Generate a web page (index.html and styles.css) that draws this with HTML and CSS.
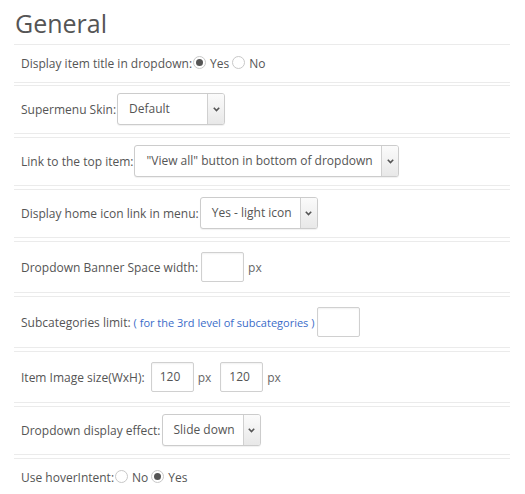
FILE: index.html
```html
<!DOCTYPE html>
<html>
<head>
<meta charset="utf-8">
<link rel="stylesheet" href="styles.css">
</head>
<body>
<div class="panel">
  <h2 class="title">General</h2>

  <div class="row row-text">
    <span class="label">Display item title in dropdown:</span>
    <span class="radio checked"></span><span class="opt">Yes</span>
    <span class="radio"></span><span class="opt">No</span>
  </div>

  <div class="row row-select">
    <span class="label">Supermenu Skin:</span>
    <div class="select w-skin"><span class="value">Default</span><span class="arrow"><svg width="7" height="5" viewBox="0 0 7 5"><path d="M0.8 0.8 L3.5 3.6 L6.2 0.8" fill="none" stroke="#555" stroke-width="1.6"/></svg></span></div>
  </div>

  <div class="row row-select">
    <span class="label">Link to the top item:</span>
    <div class="select w-link"><span class="value">"View all" button in bottom of dropdown</span><span class="arrow"><svg width="7" height="5" viewBox="0 0 7 5"><path d="M0.8 0.8 L3.5 3.6 L6.2 0.8" fill="none" stroke="#555" stroke-width="1.6"/></svg></span></div>
  </div>

  <div class="row row-select">
    <span class="label">Display home icon link in menu:</span>
    <div class="select w-home"><span class="value">Yes - light icon</span><span class="arrow"><svg width="7" height="5" viewBox="0 0 7 5"><path d="M0.8 0.8 L3.5 3.6 L6.2 0.8" fill="none" stroke="#555" stroke-width="1.6"/></svg></span></div>
  </div>

  <div class="row row-input">
    <span class="label">Dropdown Banner Space width:</span>
    <span class="input"></span>
    <span class="unit">px</span>
  </div>

  <div class="row row-input">
    <span class="label">Subcategories limit:</span>
    <span class="hint">( for the 3rd level of subcategories )</span>
    <span class="input"></span>
  </div>

  <div class="row row-input">
    <span class="label">Item Image size(WxH):</span>
    <span class="input wide-gap">120</span>
    <span class="unit">px</span>
    <span class="input wider-gap">120</span>
    <span class="unit">px</span>
  </div>

  <div class="row row-select">
    <span class="label">Dropdown display effect:</span>
    <div class="select w-effect"><span class="value">Slide down</span><span class="arrow"><svg width="7" height="5" viewBox="0 0 7 5"><path d="M0.8 0.8 L3.5 3.6 L6.2 0.8" fill="none" stroke="#555" stroke-width="1.6"/></svg></span></div>
  </div>

  <div class="row row-text">
    <span class="label">Use hoverIntent:</span>
    <span class="radio"></span><span class="opt">No</span>
    <span class="radio checked"></span><span class="opt">Yes</span>
  </div>
</div>
</body>
</html>
```

FILE: styles.css
```css
html, body {
  margin: 0;
  padding: 0;
  background: #fff;
}
body {
  font-family: "Open Sans", "Liberation Sans", sans-serif;
  font-size: 12px;
  color: #555;
}
.panel {
  width: 496px;
  margin-left: 14px;
}
.title {
  margin: 0;
  padding: 6px 0 0 1px;
  height: 44px;
  box-sizing: border-box;
  font-size: 25px;
  font-weight: 400;
  line-height: 34px;
  color: #555;
}
.row {
  display: flex;
  align-items: center;
  border-top: 1px solid #ebebeb;
  border-bottom: 1px solid #ebebeb;
  padding-left: 7px;
  margin-bottom: 3px;
}
.title + .row {
  margin-bottom: 2px;
}
.row-text {
  padding-top: 8px;
  padding-bottom: 7px;
  line-height: 22px;
}
.row-select {
  padding-top: 7px;
  padding-bottom: 8px;
}
.row-input {
  padding-top: 10px;
  padding-bottom: 10px;
}
.label {
  white-space: nowrap;
}
.radio {
  width: 11px;
  height: 11px;
  border: 1px solid #c8c8c8;
  border-radius: 50%;
  margin: 0 4px 0 1px;
  position: relative;
  top: -2px;
  background: #fff;
  box-sizing: content-box;
  display: inline-flex;
  align-items: center;
  justify-content: center;
}
.radio.checked::after {
  content: "";
  width: 7px;
  height: 7px;
  border-radius: 50%;
  background: #555;
}
.opt {
  margin-right: 2px;
}
.select {
  display: flex;
  height: 32px;
  box-sizing: border-box;
  border: 1px solid #ccc;
  border-radius: 3px;
  background: #fff;
  box-shadow: 0 1px 1px rgba(0,0,0,0.06);
  overflow: hidden;
  margin-left: 1px;
}
.select .value {
  flex: 1;
  padding-left: 11px;
  line-height: 30px;
  white-space: nowrap;
}
.select .arrow {
  width: 16px;
  border-left: 1px solid #d0d0d0;
  background: linear-gradient(#fbfbfb, #e8e8e8);
  display: flex;
  align-items: center;
  justify-content: center;
}
.w-skin { width: 108px; }
.w-link { width: 265px; }
.w-home { width: 118px; }
.w-effect { width: 99px; }
.input {
  display: block;
  width: 43px;
  height: 30px;
  box-sizing: border-box;
  border: 1px solid #d0d0d0;
  border-radius: 2px;
  box-shadow: inset 0 1px 2px rgba(0,0,0,0.06);
  margin-left: 3px;
  padding-left: 8px;
  line-height: 28px;
}
.input.wide-gap {
  margin-left: 6px;
}
.input.wider-gap {
  margin-left: 8px;
}
.unit {
  margin-left: 4px;
  margin-right: 1px;
  color: #666;
}
.hint {
  color: #3a6cc9;
  font-size: 11px;
  margin-left: 3px;
}
```
